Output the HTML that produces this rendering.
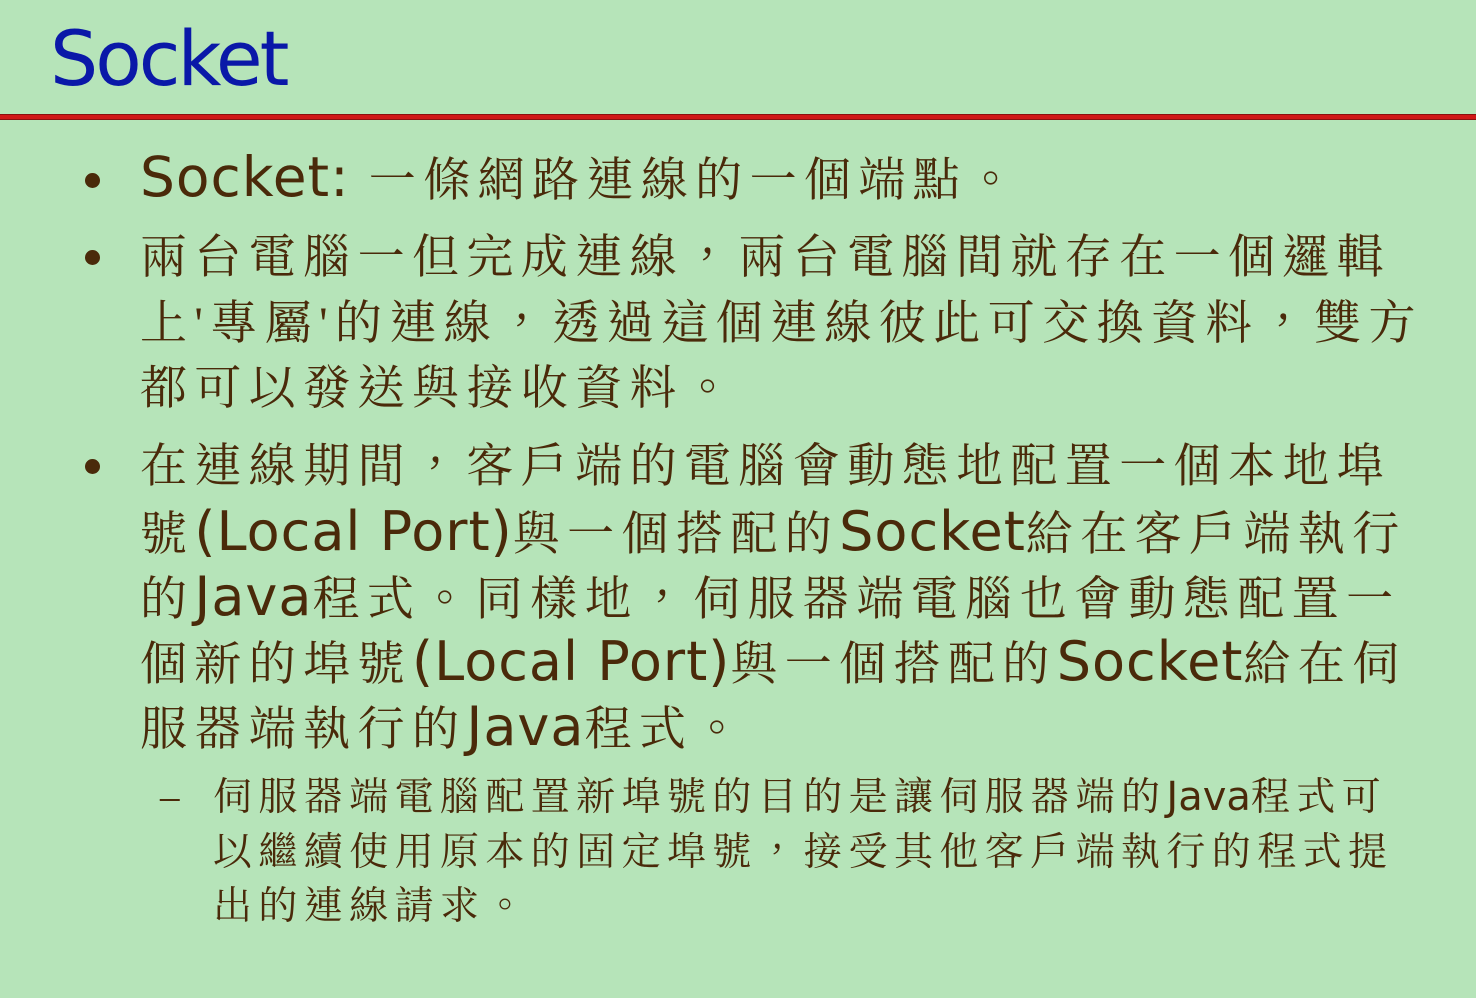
<!DOCTYPE html>
<html><head><meta charset="utf-8"><style>
body{margin:0;width:1476px;height:998px;background:#b6e4b9;overflow:hidden;position:relative;font-family:"Liberation Serif","Noto Serif CJK TC","Noto Serif CJK SC",serif;color:#4a2a0a}
.t{position:absolute;left:50px;top:14px;font:76px "DejaVu Sans",sans-serif;color:#0a18a8;letter-spacing:-3px}
.rl{position:absolute;left:0;top:114px;width:1476px;height:6px;background:#d01818;border-top:1px solid #8a1010;border-bottom:1px solid #8a1010;box-sizing:border-box}
.l{position:absolute;left:140px;white-space:nowrap;font-size:47px;line-height:46px;letter-spacing:7.4px}
.s{position:absolute;left:213px;white-space:nowrap;font-size:39px;line-height:38px;letter-spacing:6.4px}
.e{font-family:"DejaVu Sans",sans-serif;letter-spacing:1px;font-size:54px}
.s .e{font-size:40px;letter-spacing:0}
.b{position:absolute;left:85px;width:15px;height:15px;border-radius:50%;background:#4a2a0a}
</style></head><body>
<div class="t">Socket</div>
<div class="rl"></div>
<div class="b" style="top:173px"></div>
<div class="b" style="top:250px"></div>
<div class="b" style="top:459px"></div>
<div class="l" style="top:154px"><span class="e" style="font-size:55px">Socket:</span> 一條網路連線的一個端點。</div>
<div class="l" style="top:235px">兩台電腦一但完成連線，兩台電腦間就存在一個邏輯</div>
<div class="l" style="top:301px">上'專屬'的連線，透過這個連線彼此可交換資料，雙方</div>
<div class="l" style="top:366px">都可以發送與接收資料。</div>
<div class="l" style="top:444px">在連線期間，客戶端的電腦會動態地配置一個本地埠</div>
<div class="l" style="top:509px">號<span class="e">(Local Port)</span>與一個搭配的<span class="e">Socket</span>給在客戶端執行</div>
<div class="l" style="top:574px">的<span class="e">Java</span>程式。同樣地，伺服器端電腦也會動態配置一</div>
<div class="l" style="top:639px">個新的埠號<span class="e">(Local Port)</span>與一個搭配的<span class="e">Socket</span>給在伺</div>
<div class="l" style="top:704px">服器端執行的<span class="e">Java</span>程式。</div>
<div class="s" style="left:160px;top:778px">–</div>
<div class="s" style="top:778px">伺服器端電腦配置新埠號的目的是讓伺服器端的<span class="e">Java</span>程式可</div>
<div class="s" style="top:834px">以繼續使用原本的固定埠號，接受其他客戶端執行的程式提</div>
<div class="s" style="top:888px">出的連線請求。</div>
</body></html>
